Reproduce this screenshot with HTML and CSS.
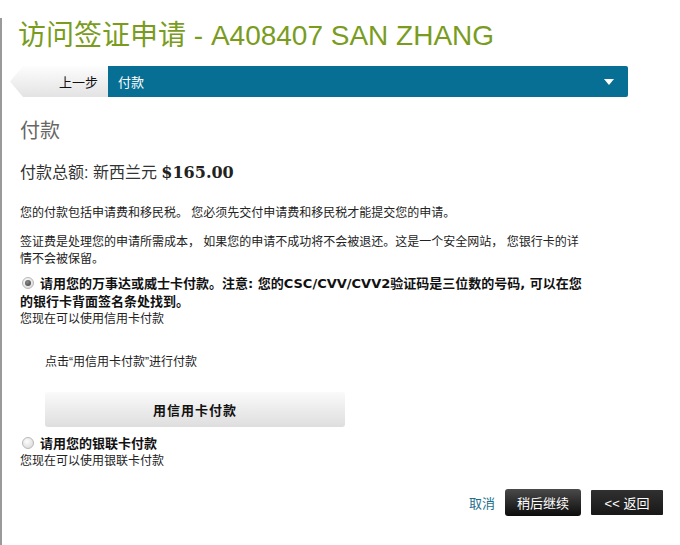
FILE: index.html
```html
<!DOCTYPE html>
<html lang="zh-CN">
<head>
    <meta charset="UTF-8">
    <title>访问签证申请</title>
    <link rel="stylesheet" href="styles.css">
</head>
<body>
    <div class="page">
        <h1 class="title">访问签证申请 - A408407 SAN ZHANG</h1>

        <div class="steps">
            <a class="back-step">上一步</a>
            <div class="step-select">
                <span>付款</span>
                <span class="caret"></span>
            </div>
        </div>

        <h2 class="section-title">付款</h2>
        <div class="total">付款总额: 新西兰元 <strong>$165.00</strong></div>

        <p class="note">您的付款包括申请费和移民税。 您必须先交付申请费和移民税才能提交您的申请。</p>
        <p class="note second">签证费是处理您的申请所需成本， 如果您的申请不成功将不会被退还。这是一个安全网站， 您银行卡的详情不会被保留。</p>

        <div class="option first">
            <span class="radio checked"></span><b>请用您的万事达或威士卡付款。注意: 您的CSC/CVV/CVV2验证码是三位数的号码, 可以在您的银行卡背面签名条处找到。</b>
            <div>您现在可以使用信用卡付款</div>
        </div>

        <p class="click-hint">点击“用信用卡付款”进行付款</p>
        <button class="pay-button">用信用卡付款</button>

        <div class="option">
            <span class="radio"></span><b>请用您的银联卡付款</b>
            <div>您现在可以使用银联卡付款</div>
        </div>

        <div class="actions">
            <a class="cancel">取消</a>
            <button class="dark-button later">稍后继续</button>
            <button class="dark-button back">&lt;&lt; 返回</button>
        </div>
    </div>
</body>
</html>
```

FILE: styles.css
```css
:root {
    --title-green: #7a9c1e;
    --step-blue: #076f94;
    --text-color: #222;
    --link-color: #1d6f8c;
}

body {
    margin: 0;
    font-family: "Liberation Sans", "Noto Sans CJK SC", sans-serif;
    font-size: 12px;
    color: var(--text-color);
    background: #fff;
}

.page {
    border-left: 2px solid #9a9a9a;
    min-height: 545px;
    box-sizing: border-box;
    padding-left: 18px;
    width: 663px;
}

.title {
    margin: 18px 0 0 -2px;
    font-size: 28px;
    line-height: 36px;
    font-weight: normal;
    color: var(--title-green);
}

/* step bar */
.steps {
    display: flex;
    margin: 12px 0 0 -10px;
    height: 31px;
}

.back-step {
    width: 98px;
    box-sizing: border-box;
    padding-right: 10px;
    display: flex;
    align-items: center;
    justify-content: flex-end;
    font-size: 13px;
    color: #111;
    background: linear-gradient(#fdfdfd, #e3e3e3);
    clip-path: polygon(13px 0, 100% 0, 100% 100%, 13px 100%, 0 50%);
}

.step-select {
    width: 520px;
    display: flex;
    align-items: center;
    justify-content: space-between;
    padding: 0 14px 0 10px;
    box-sizing: border-box;
    background: var(--step-blue);
    color: #fff;
    font-size: 13px;
    border-radius: 0 2px 2px 0;
}

.caret {
    width: 0;
    height: 0;
    border-left: 5px solid transparent;
    border-right: 5px solid transparent;
    border-top: 6px solid #fff;
}

.section-title {
    margin: 22px 0 0;
    font-size: 20px;
    line-height: 24px;
    font-weight: normal;
    color: #666;
}

.total {
    margin-top: 19px;
    font-size: 16px;
    line-height: 22px;
    color: #333;
}

.total strong {
    font-family: "DejaVu Serif", serif;
    font-size: 16px;
    color: #222;
}

.note {
    margin: 21px 0 0;
    width: 565px;
    line-height: 17px;
}

.note.second {
    margin-top: 12px;
}

.option {
    margin-top: 8px;
    width: 565px;
    line-height: 17px;
}

.option.first {
    margin-top: 7px;
}

.option b {
    font-family: "DejaVu Sans", "Noto Sans CJK SC", sans-serif;
    font-size: 13px;
    color: #111;
}

.radio {
    display: inline-block;
    width: 12px;
    height: 12px;
    margin: 0 6px 0 2px;
    vertical-align: -1px;
    border-radius: 50%;
    box-sizing: border-box;
    border: 1px solid #b8b8b8;
    background: radial-gradient(circle at 40% 35%, #fdfdfd, #d4d4d4);
    position: relative;
}

.radio.checked::after {
    content: "";
    position: absolute;
    left: 2px;
    top: 2px;
    width: 6px;
    height: 6px;
    border-radius: 50%;
    background: radial-gradient(circle at 40% 35%, #8a8a8a, #3c3c3c);
}

.click-hint {
    margin: 26px 0 0 25px;
    line-height: 17px;
}

.pay-button {
    display: block;
    margin: 21px 0 0 25px;
    width: 300px;
    height: 35px;
    border: none;
    border-radius: 3px;
    background: linear-gradient(#fafafa, #dedede);
    font-family: "Noto Sans CJK SC", sans-serif;
    font-size: 13px;
    font-weight: bold;
    letter-spacing: 1px;
    color: #111;
}

.actions {
    display: flex;
    justify-content: flex-end;
    align-items: center;
    gap: 10px;
    margin-top: 19px;
}

.cancel {
    font-size: 13px;
    color: var(--link-color);
}

.dark-button {
    border: none;
    color: #fff;
    font-family: "Liberation Sans", "Noto Sans CJK SC", sans-serif;
    font-size: 13px;
    padding: 0;
}

.later {
    width: 76px;
    height: 27px;
    border-radius: 3px;
    background: linear-gradient(#4a4a4a, #0c0c0c);
}

.back {
    width: 72px;
    height: 25px;
    border-radius: 1px;
    background: linear-gradient(#303030, #181818);
}
```
